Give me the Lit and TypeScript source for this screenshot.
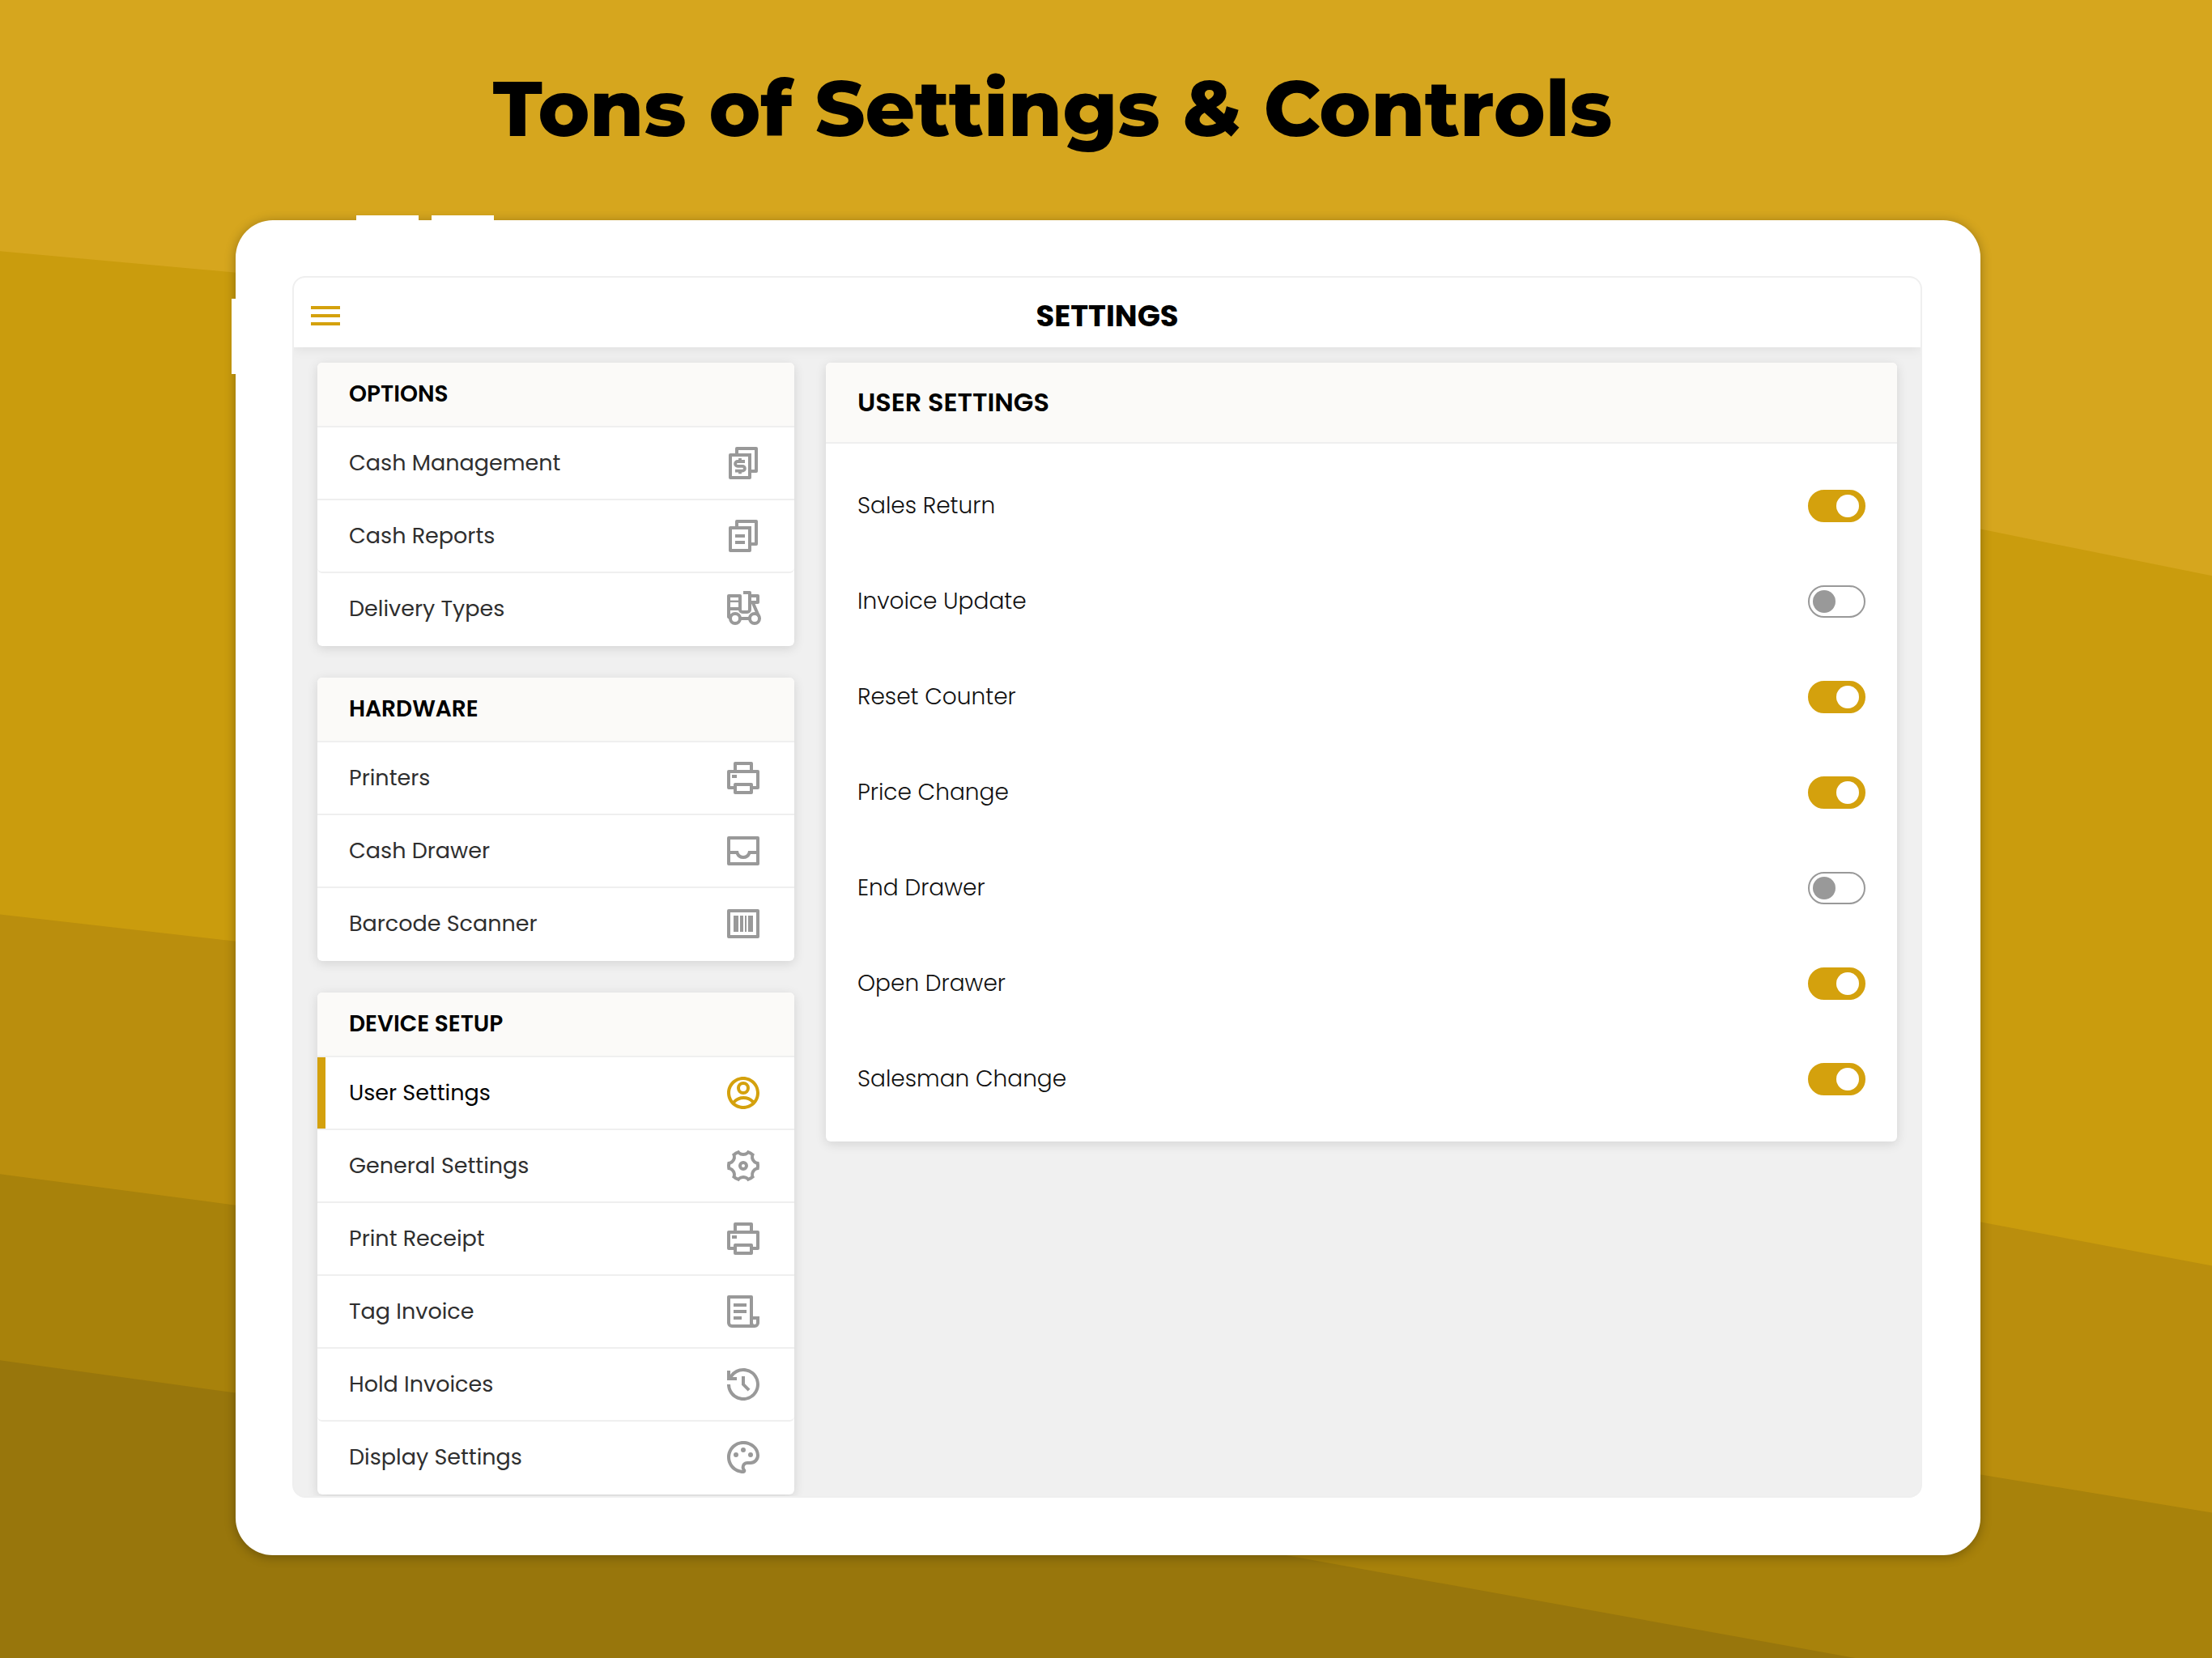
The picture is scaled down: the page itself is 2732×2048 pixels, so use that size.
import { LitElement, html, css, svg, nothing } from "lit";
import { customElement, state } from "lit/decorators.js";
import { classMap } from "lit/directives/class-map.js";

interface MenuItem {
  label: string;
  icon: string;
}

interface MenuGroup {
  title: string;
  items: MenuItem[];
}

interface Setting {
  id: string;
  label: string;
  on: boolean;
}

const filled = (d: string) => svg`<path fill="currentColor" fill-rule="evenodd" d=${d} />`;

const copies =
  "M7 6V3a1 1 0 0 1 1-1h12a1 1 0 0 1 1 1v14a1 1 0 0 1-1 1h-3v3a1 1 0 0 1-1 1H4a1 1 0 0 1-1-1V7a1 1 0 0 1 1-1h3zM5 8v12h10V8H5zm4-2h8v10h2V4H9v2z";

const icons: Record<string, unknown> = {
  cash: svg`
    ${filled(copies)}
    <path fill="none" stroke="currentColor" stroke-width="1.9"
      d="M13 11H8.5a1.45 1.45 0 0 0 0 2.9h3a1.45 1.45 0 0 1 0 2.9H7M10 9v2M10 17v1.6" />`,
  reports: filled(copies + "M7 11h6v2H7zM7 15h6v2H7z"),
  scooter: svg`
    <g fill="none" stroke="currentColor" stroke-width="2" stroke-linejoin="round">
      <circle cx="7" cy="18" r="3" />
      <circle cx="19" cy="18" r="3" />
      <path d="M10 18h6M12 2h4v10.500a1.500 1.500 0 0 1-1.500 1.500h-3a1.500 1.500 0 0 1-1.500-1.500V4H3v13l1.500 1M3 12h7M16 4h5v4h-4M18 8.500l3.500 8" />
      <path stroke-width="1.200" d="M3 7.400h7" />
    </g>`,
  printer: filled(
    "M6 19H3a1 1 0 0 1-1-1V8a1 1 0 0 1 1-1h3V3a1 1 0 0 1 1-1h10a1 1 0 0 1 1 1v4h3a1 1 0 0 1 1 1v10a1 1 0 0 1-1 1h-3v2a1 1 0 0 1-1 1H7a1 1 0 0 1-1-1v-2zm0-2v-1a1 1 0 0 1 1-1h10a1 1 0 0 1 1 1v1h2V9H4v8h2zM8 4v3h8V4H8zm0 13v3h8v-3H8zm-3-7h3v2H5v-2z"
  ),
  drawer: filled(
    "M3 3h18a1 1 0 0 1 1 1v16a1 1 0 0 1-1 1H3a1 1 0 0 1-1-1V4a1 1 0 0 1 1-1zm17 11h-3.416a5.001 5.001 0 0 1-9.168 0H4v5h16v-5zm0-2V5H4v7h5a3 3 0 0 0 6 0h5z"
  ),
  barcode: filled(
    "M3 3h18a1 1 0 0 1 1 1v16a1 1 0 0 1-1 1H3a1 1 0 0 1-1-1V4a1 1 0 0 1 1-1zm1 2v14h16V5H4zm2 2h3v10H6V7zm4 0h2v10h-2V7zm3 0h1v10h-1V7zm2 0h3v10h-3V7z"
  ),
  user: filled(
    "M12 22C6.477 22 2 17.523 2 12S6.477 2 12 2s10 4.477 10 10-4.477 10-10 10zm-4.987-3.744A7.966 7.966 0 0 0 12 20c1.97 0 3.773-.712 5.167-1.892A6.979 6.979 0 0 0 12.16 16a6.981 6.981 0 0 0-5.147 2.256zM5.616 16.82A8.975 8.975 0 0 1 12.16 14a8.972 8.972 0 0 1 6.362 2.634 8 8 0 1 0-12.906.187zM12 13a4 4 0 1 1 0-8 4 4 0 0 1 0 8zm0-2a2 2 0 1 0 0-4 2 2 0 0 0 0 4z"
  ),
  gear: filled(
    "M2 12c0-.865.11-1.703.316-2.504A3 3 0 0 0 4.99 4.867a9.99 9.99 0 0 1 4.335-2.505 3 3 0 0 0 5.348 0 9.99 9.99 0 0 1 4.335 2.505 3 3 0 0 0 2.675 4.63c.206.8.316 1.638.316 2.503 0 .865-.11 1.703-.316 2.504a3 3 0 0 0-2.675 4.629 9.99 9.99 0 0 1-4.335 2.505 3 3 0 0 0-5.348 0 9.99 9.99 0 0 1-4.335-2.505 3 3 0 0 0-2.675-4.63C2.11 13.704 2 12.866 2 12zm4.804 3c.63 1.091.81 2.346.564 3.524.408.29.842.541 1.297.75A4.993 4.993 0 0 1 12 18c1.26 0 2.438.471 3.335 1.274.455-.209.889-.46 1.297-.75A4.993 4.993 0 0 1 17.196 15a4.993 4.993 0 0 1 2.77-2.25 8.126 8.126 0 0 0 0-1.5A4.993 4.993 0 0 1 17.195 9a4.993 4.993 0 0 1-.564-3.524 7.989 7.989 0 0 0-1.297-.75A4.993 4.993 0 0 1 12 6a4.993 4.993 0 0 1-3.335-1.274 7.99 7.99 0 0 0-1.297.75A4.993 4.993 0 0 1 6.804 9a4.993 4.993 0 0 1-2.77 2.25 8.126 8.126 0 0 0 0 1.5A4.993 4.993 0 0 1 6.805 15zM12 15a3 3 0 1 1 0-6 3 3 0 0 1 0 6zm0-2a1 1 0 1 0 0-2 1 1 0 0 0 0 2z"
  ),
  invoice: filled(
    "M19 22H5a3 3 0 0 1-3-3V3a1 1 0 0 1 1-1h14a1 1 0 0 1 1 1v12h4v4a3 3 0 0 1-3 3zm-1-5v2a1 1 0 0 0 2 0v-2h-2zm-2 3V4H4v15a1 1 0 0 0 1 1h11zM6 7h8v2H6V7zm0 4h8v2H6v-2zm0 4h5v2H6v-2z"
  ),
  history: filled(
    "M12 2c5.523 0 10 4.477 10 10s-4.477 10-10 10S2 17.523 2 12h2a8 8 0 1 0 1.385-4.5H8v2H2v-6h2V6a9.981 9.981 0 0 1 8-4zm1 5v4.585l3.243 3.243-1.415 1.415L11 12.414V7h2z"
  ),
  palette: filled(
    "M12 2c5.522 0 10 3.978 10 8.889a5.558 5.558 0 0 1-5.556 5.555h-1.966c-.922 0-1.667.745-1.667 1.667 0 .422.167.811.422 1.1.267.3.434.689.434 1.122C13.667 21.256 12.9 22 12 22 6.478 22 2 17.522 2 12S6.478 2 12 2zm-1.189 16.111a3.664 3.664 0 0 1 3.667-3.667h1.966A3.558 3.558 0 0 0 20 10.89C20 7.139 16.468 4 12 4a8 8 0 0 0-.676 15.972 3.648 3.648 0 0 1-.513-1.86zM7.5 12a1.5 1.5 0 1 1 0-3 1.5 1.5 0 0 1 0 3zm9 0a1.5 1.5 0 1 1 0-3 1.5 1.5 0 0 1 0 3zM12 9a1.5 1.5 0 1 1 0-3 1.5 1.5 0 0 1 0 3z"
  ),
  menu: filled("M3 6h18v2H3zM3 11h18v2H3zM3 16h18v2H3z"),
};

const icon = (name: string) =>
  html`<svg class="icon" viewBox="0 0 24 24" aria-hidden="true">${icons[name]}</svg>`;

const groups: MenuGroup[] = [
  {
    title: "OPTIONS",
    items: [
      { label: "Cash Management", icon: "cash" },
      { label: "Cash Reports", icon: "reports" },
      { label: "Delivery Types", icon: "scooter" },
    ],
  },
  {
    title: "HARDWARE",
    items: [
      { label: "Printers", icon: "printer" },
      { label: "Cash Drawer", icon: "drawer" },
      { label: "Barcode Scanner", icon: "barcode" },
    ],
  },
  {
    title: "DEVICE SETUP",
    items: [
      { label: "User Settings", icon: "user" },
      { label: "General Settings", icon: "gear" },
      { label: "Print Receipt", icon: "printer" },
      { label: "Tag Invoice", icon: "invoice" },
      { label: "Hold Invoices", icon: "history" },
      { label: "Display Settings", icon: "palette" },
    ],
  },
];

@customElement("app-root")
export class AppRoot extends LitElement {
  @state() private selected = "User Settings";

  @state() private settings: Setting[] = [
    { id: "sales-return", label: "Sales Return", on: true },
    { id: "invoice-update", label: "Invoice Update", on: false },
    { id: "reset-counter", label: "Reset Counter", on: true },
    { id: "price-change", label: "Price Change", on: true },
    { id: "end-drawer", label: "End Drawer", on: false },
    { id: "open-drawer", label: "Open Drawer", on: true },
    { id: "salesman-change", label: "Salesman Change", on: true },
  ];

  static styles = css`
    :host {
      --gold: #d4a10d;
      --line: #efefef;
      --ink: #2f2f2f;
      --grey: #999999;
      display: block;
      font-family: Poppins, Inter, "Open Sans", sans-serif;
      color: #000000;
    }
    * {
      box-sizing: border-box;
    }
    h1,
    h2,
    h3,
    ul {
      margin: 0;
      padding: 0;
    }
    .stage {
      position: relative;
      isolation: isolate;
      display: flex;
      flex-direction: column;
      min-height: 100vh;
      overflow: hidden;
      background: #d6a61e;
    }
    .bands {
      position: absolute;
      inset: 0;
      z-index: -1;
      width: 100%;
      height: 100%;
    }
    .headline {
      padding: 70px 132px 74px 0;
      font-family: Montserrat, Inter, sans-serif;
      font-size: 96px;
      font-weight: 800;
      line-height: 128px;
      text-align: center;
    }
    .device {
      position: relative;
      flex: 1;
      display: flex;
      margin: 0 286px 127px 291px;
      padding: 69px 72px 71px 70px;
      border-radius: 46px;
      background: #ffffff;
      box-shadow: 0 2px 14px rgba(0, 0, 0, 0.3);
    }
    .key {
      position: absolute;
      background: #ffffff;
    }
    .volume {
      top: -6px;
      width: 77px;
      height: 6px;
    }
    .up {
      left: 149px;
    }
    .down {
      left: 242px;
    }
    .power {
      left: -5px;
      top: 97px;
      width: 5px;
      height: 93px;
    }
    .screen {
      flex: 1;
      display: flex;
      flex-direction: column;
      overflow: hidden;
      border: 2px solid var(--line);
      border-radius: 16px;
      background: #f0f0f0;
    }
    .topbar {
      display: grid;
      grid-template-columns: 1fr auto 1fr;
      align-items: center;
      height: 86px;
      padding: 8px 15px 0;
      background: #ffffff;
      box-shadow: 0 2px 14px rgba(0, 0, 0, 0.08);
    }
    .topbar h2 {
      font-size: 37px;
      font-weight: 700;
      line-height: 48px;
    }
    .menu {
      width: 48px;
      height: 48px;
      padding: 0;
      border: 0;
      background: none;
      color: var(--gold);
      cursor: pointer;
    }
    .icon {
      display: block;
      flex: none;
      width: 48px;
      height: 48px;
    }
    .content {
      display: grid;
      grid-template-columns: 589fr 1323fr;
      align-items: start;
      gap: 39px;
      padding: 19px 29px 0;
    }
    .groups {
      display: flex;
      flex-direction: column;
      gap: 39px;
    }
    .card {
      border-radius: 6px;
      background: #ffffff;
      box-shadow: 0 3px 14px rgba(0, 0, 0, 0.12);
    }
    .card h3 {
      display: flex;
      align-items: center;
      height: 80px;
      padding: 0 39px;
      border-bottom: 2px solid var(--line);
      border-radius: 6px 6px 0 0;
      background: #fbfaf8;
      font-size: 28px;
      font-weight: 600;
      line-height: 40px;
    }
    .panel h3 {
      height: 100px;
      font-size: 32px;
    }
    .items {
      list-style: none;
    }
    .item {
      display: flex;
      align-items: center;
      justify-content: space-between;
      width: 100%;
      height: 90px;
      padding: 0 39px;
      border: 0;
      border-bottom: 2px solid var(--line);
      border-radius: 0;
      background: none;
      color: var(--ink);
      font: inherit;
      font-size: 27px;
      line-height: 40px;
      cursor: pointer;
    }
    .card:nth-child(odd) li:nth-last-child(2) .item {
      border-radius: 0 0 6px 6px;
    }
    li:last-child .item {
      border-bottom-color: transparent;
    }
    .item .icon {
      color: var(--grey);
    }
    .item.active {
      box-shadow: inset 10px 0 0 var(--gold);
      color: #000000;
    }
    .item.active .icon {
      color: var(--gold);
    }
    .rows {
      padding: 18px 39px;
    }
    .row {
      display: flex;
      align-items: center;
      justify-content: space-between;
      height: 118px;
      color: #111111;
      font-size: 28px;
      font-weight: 300;
      line-height: 40px;
    }
    .toggle {
      display: flex;
      align-items: center;
      appearance: none;
      width: 71px;
      height: 40px;
      margin: 0;
      padding: 0 4px;
      border: 2px solid var(--grey);
      border-radius: 20px;
      background: #ffffff;
      cursor: pointer;
    }
    .toggle::before {
      content: "";
      width: 28px;
      height: 28px;
      border-radius: 50%;
      background: var(--grey);
    }
    .toggle:checked {
      justify-content: flex-end;
      padding-right: 6px;
      border-color: var(--gold);
      background: var(--gold);
    }
    .toggle:checked::before {
      background: #ffffff;
    }
  `;

  private toggle(id: string) {
    this.settings = this.settings.map((s) => (s.id === id ? { ...s, on: !s.on } : s));
  }

  private renderGroup(group: MenuGroup) {
    return html`
      <section class="card">
        <h3>${group.title}</h3>
        <ul class="items">
          ${group.items.map((item) => {
            const active = item.label === this.selected;
            return html`
              <li>
                <button
                  class=${classMap({ item: true, active })}
                  type="button"
                  aria-current=${active ? "page" : nothing}
                  @click=${() => (this.selected = item.label)}
                >
                  <span>${item.label}</span>${icon(item.icon)}
                </button>
              </li>
            `;
          })}
        </ul>
      </section>
    `;
  }

  render() {
    return html`
      <main class="stage">
        <svg class="bands" viewBox="0 0 1568 1175" preserveAspectRatio="none" aria-hidden="true">
          <path fill="#ca9c0d" d="M0 178L166 193L1404 375L1568 408V1175H0z" />
          <path fill="#ba8e0d" d="M0 648L166 667L1404 866L1568 897V1175H0z" />
          <path fill="#a8820b" d="M0 832L166 854L1404 1045L1568 1072V1175H0z" />
          <path fill="#98760c" d="M0 964L166 987L905 1101L1315 1175H0z" />
        </svg>
        <h1 class="headline">Tons of Settings &amp; Controls</h1>
        <div class="device">
          <span class="key volume up"></span>
          <span class="key volume down"></span>
          <span class="key power"></span>
          <div class="screen">
            <header class="topbar">
              <button class="menu" type="button" aria-label="Menu">${icon("menu")}</button>
              <h2>SETTINGS</h2>
            </header>
            <div class="content">
              <nav class="groups">${groups.map((g) => this.renderGroup(g))}</nav>
              <section class="card panel">
                <h3>USER SETTINGS</h3>
                <div class="rows">
                  ${this.settings.map(
                    (s) => html`
                      <div class="row">
                        <label for=${s.id}>${s.label}</label>
                        <input
                          class="toggle"
                          type="checkbox"
                          role="switch"
                          id=${s.id}
                          .checked=${s.on}
                          @change=${() => this.toggle(s.id)}
                        />
                      </div>
                    `
                  )}
                </div>
              </section>
            </div>
          </div>
        </div>
      </main>
    `;
  }
}
